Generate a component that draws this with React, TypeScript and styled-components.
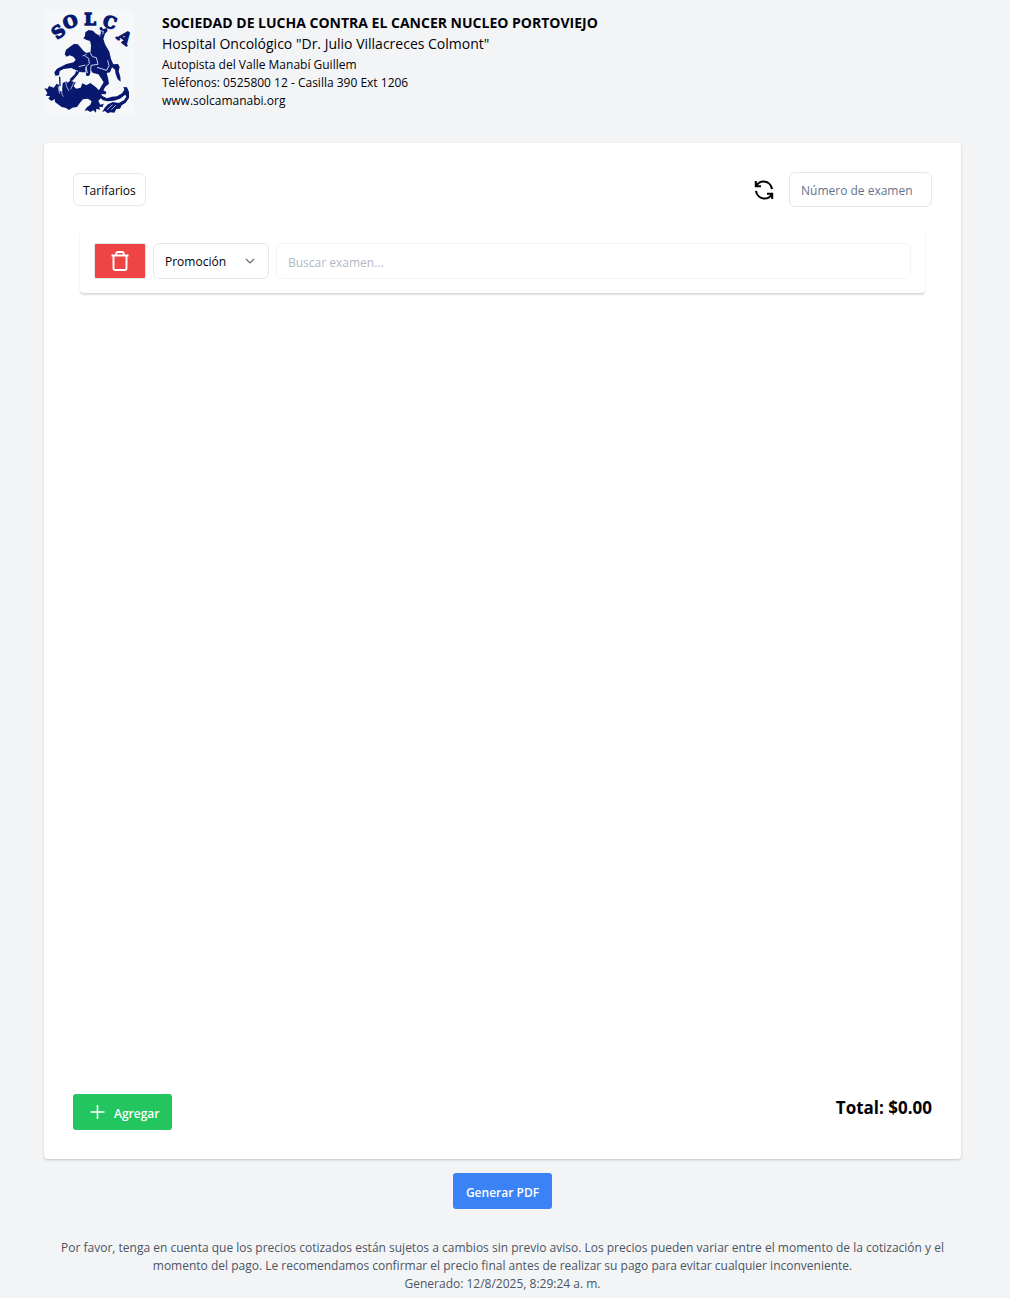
import React from "react";
import styled, { createGlobalStyle } from "styled-components";

const GlobalStyle = createGlobalStyle`
  *, *::before, *::after { box-sizing: border-box; }
  body {
    margin: 0;
    background: #f3f4f6;
    color: #020208;
    font-family: "Segoe UI", "Open Sans", "Noto Sans", sans-serif;
    font-size: 12px;
    line-height: 18px;
  }
  h1, h2, p { margin: 0; }
  button, input, select { font: inherit; color: inherit; }
`;

const Page = styled.div`
  display: flex;
  flex-direction: column;
  min-height: 100vh;
  padding: 10px 49px 5px 44px;
`;

const Header = styled.header`
  display: flex;
  gap: 28px;
  margin-bottom: 29px;
`;

const Logo = styled.svg`
  width: 90px;
  height: 104px;
  flex: none;
  overflow: visible;
  background: #f5f7f9;
  color: #08186f;
`;

const Organisation = styled.div`
  padding-top: 4px;
`;

const Name = styled.h1`
  font-size: 14px;
  font-weight: 700;
  line-height: 18px;
`;

const Hospital = styled.h2`
  font-size: 14px;
  font-weight: 400;
  line-height: 24px;
`;

const Card = styled.main`
  display: flex;
  flex-direction: column;
  flex: 1;
  padding: 29px;
  background: #fff;
  border-radius: 4px;
  box-shadow: 0 1px 3px rgba(0, 0, 0, 0.1), 0 1px 2px rgba(0, 0, 0, 0.1);
`;

const Bar = styled.div`
  display: flex;
  align-items: center;
  justify-content: space-between;
`;

const Group = styled.div`
  display: flex;
  align-items: center;
  gap: 15px;
`;

const OutlineButton = styled.button`
  height: 33px;
  padding: 2px 9px 0;
  background: #fff;
  border: 1px solid #e2e8f0;
  border-radius: 6px;
  cursor: pointer;
`;

const IconButton = styled.button`
  display: flex;
  padding: 0;
  border: 0;
  background: none;
  cursor: pointer;
`;

const Field = styled.input`
  min-width: 0;
  padding: 2px 11px 0;
  background: #fff;
  border: 1px solid #e2e8f0;
  border-radius: 6px;
  &::placeholder { color: #64748b; opacity: 1; }
  &:disabled { opacity: 0.5; }
`;

const NumberField = styled(Field)`
  width: 143px;
  height: 35px;
`;

const SearchField = styled(Field)`
  flex: 1;
  height: 36px;
`;

const List = styled.section`
  flex: 1;
  padding: 22px 7px;
`;

const Item = styled.div`
  display: flex;
  align-items: center;
  gap: 7px;
  padding: 14px;
  border-radius: 4px;
  box-shadow: 0 2px 2px rgba(0, 0, 0, 0.12), 0 1px 1px rgba(0, 0, 0, 0.05);
`;

const DeleteButton = styled.button`
  display: flex;
  align-items: center;
  justify-content: center;
  width: 52px;
  height: 36px;
  padding: 0;
  color: #fff;
  background: #ef4444;
  border: 1px solid #e2e8f0;
  border-radius: 2px;
  cursor: pointer;
`;

const SelectBox = styled.div`
  display: grid;
  align-items: center;
  width: 116px;
  & > * { grid-area: 1 / 1; }
  & > svg { justify-self: end; margin-right: 13px; pointer-events: none; }
`;

const Select = styled.select`
  appearance: none;
  width: 100%;
  height: 36px;
  padding: 2px 11px 0;
  background: #fff;
  border: 1px solid #e2e8f0;
  border-radius: 6px;
`;

const Footer = styled.div`
  display: flex;
  align-items: flex-start;
  justify-content: space-between;
`;

const SolidButton = styled.button<{ $tone: string }>`
  display: flex;
  align-items: center;
  justify-content: center;
  gap: 6px;
  height: 36px;
  padding: 0 13px;
  color: #fff;
  font-weight: 600;
  background: ${(p) => p.$tone};
  border: 0;
  border-radius: 3px;
  cursor: pointer;
  & > span { padding-top: 3px; }
`;

const Total = styled.p`
  font-size: 17px;
  font-weight: 700;
  line-height: 28px;
`;

const Actions = styled.div`
  display: flex;
  justify-content: center;
  padding: 14px 0 30px;
`;

const Notice = styled.footer`
  padding: 0 14px;
  color: #4b5563;
  text-align: center;
`;

function SolcaLogo() {
  return (
    <Logo viewBox="24 18 270 312" role="img" aria-label="SOLCA" fill="currentColor">
      <g fontFamily="DejaVu Serif, serif" fontWeight="700" fontSize="50" textAnchor="middle" stroke="currentColor" strokeWidth="4">
        <text transform="translate(67 83) rotate(-38)" y="18">S</text>
        <text transform="translate(103 53) rotate(-20)" y="18">O</text>
        <text transform="translate(162 45)" y="18">L</text>
        <text transform="translate(222 54) rotate(18)" y="18">C</text>
        <text transform="translate(266 100) rotate(38)" y="18">A</text>
      </g>
      {/* rider and horse */}
      <path d="M142 103 L147 96 L148 85 L158 78 L171 80 L178 88 L188 94 L193 90 L193 79 L190 72 L196 68 L202 76 L212 72 L215 80 L207 89 L202 104 L207 121 L220 143 L225 165 L232 181 L246 180 L251 189 L248 202 L253 218 L254 233 L245 226 L239 210 L237 197 L228 190 L222 205 L212 207 L216 222 L219 239 L208 248 L202 259 L211 264 L209 271 L192 270 L187 262 L203 235 L195 222 L187 211 L171 207 L165 200 L160 215 L151 216 L149 205 L136 205 L119 198 L106 192 L83 195 L71 201 L69 214 L58 215 L55 205 L63 194 L91 180 L113 175 L119 167 L112 158 L101 154 L92 158 L86 151 L90 137 L102 128 L115 119 L121 121 L125 120 L130 126 L143 141 L151 147 L164 143 L165 123 L162 111 L152 108 Z" />
      {/* lance and raised foreleg */}
      <path d="M131 198 L120 214 L106 229 L94 242" fill="none" stroke="currentColor" strokeWidth="5" />
      <path d="M120 200 L128 207 L114 224 L107 231 L101 226 L117 210 Z" />
      <path d="M71 218 L72 246" stroke="currentColor" strokeWidth="4" />
      {/* dragon */}
      <path d="M25 252 L34 255 L39 246 L53 251 L62 239 L69 243 L70 262 L78 262 L80 237 L91 232 L97 238 L106 232 L119 235 L113 247 L121 254 L134 251 L139 238 L151 244 L163 237 L180 250 L191 261 L199 276 L213 283 L228 278 L243 277 L258 268 L265 257 L262 249 L273 250 L279 264 L279 282 L269 296 L257 304 L252 314 L241 315 L235 326 L224 325 L215 328 L207 321 L199 324 L206 311 L216 301 L230 294 L248 297 L264 289 L271 278 L268 272 L252 284 L234 290 L214 292 L201 289 L194 283 L187 291 L193 302 L203 299 L200 309 L190 308 L192 317 L181 314 L180 326 L172 319 L163 324 L154 319 L145 320 L153 310 L163 302 L167 292 L156 284 L141 286 L132 296 L123 309 L109 311 L99 318 L90 312 L77 309 L66 301 L57 294 L56 285 L47 291 L37 284 L42 276 L29 275 L34 267 Z" />
      {/* saddle, reins and harness */}
      <g fill="none" stroke="#eef2fa" strokeWidth="2.5" strokeLinejoin="round">
        <path d="M148 157 L158 163 L160 179 L150 188 L154 207" />
        <path d="M162 145 L169 158 L181 161 L186 181 L165 184 L164 204" />
        <path d="M183 190 L212 199 L219 185 L215 169" />
        <path d="M128 188 L148 183 M149 190 L150 208 M140 156 L152 151" />
        <path d="M191 98 L194 80 L202 82 L200 91" />
        <path d="M86 211 L91 246 L99 261 M120 224 L111 241 L104 256" strokeWidth="2" />
        <path d="M76 246 L78 271 L82 278 M66 247 L71 269" strokeWidth="2" />
        <path d="M230 302 L213 317 M240 303 L226 317" strokeWidth="2" />
      </g>
    </Logo>
  );
}

function RefreshIcon() {
  return (
    <svg width="20" height="20" viewBox="0 0 20 20" fill="none" stroke="currentColor" strokeWidth="2">
      <path d="M1.8 1V6.2H7M2.2 5.8C4 2.8 6.5 1.4 9.5 1.4C14 1.4 17.5 4.7 18 9.2" />
      <path d="M18.2 19V13.8H13M17.8 14.2C16 17.2 13.5 18.6 10.5 18.6C6 18.6 2.5 15.3 2 10.8" />
    </svg>
  );
}

function TrashIcon() {
  return (
    <svg width="20" height="20" viewBox="0 0 20 20" fill="none" stroke="currentColor" strokeWidth="1.9" strokeLinejoin="round">
      <path d="M1.5 4.5H18.5M3.5 4.5V17.2Q3.5 19 5.3 19H14.7Q16.5 19 16.5 17.2V4.5M6.3 4.2V2.5Q6.3 1 7.8 1H12.2Q13.7 1 13.7 2.5V4.2" />
    </svg>
  );
}

function ChevronIcon() {
  return (
    <svg width="12" height="12" viewBox="0 0 12 12" fill="none" stroke="#64646f" strokeWidth="1.1">
      <path d="M2 4L6 8L10 4" />
    </svg>
  );
}

function PlusIcon() {
  return (
    <svg width="22" height="22" viewBox="0 0 22 22" fill="none" stroke="currentColor" strokeWidth="1.6">
      <path d="M11.5 4V18M4.5 11H18.5" />
    </svg>
  );
}

export default function App() {
  return (
    <>
      <GlobalStyle />
      <Page>
        <Header>
          <SolcaLogo />
          <Organisation>
            <Name>SOCIEDAD DE LUCHA CONTRA EL CANCER NUCLEO PORTOVIEJO</Name>
            <Hospital>Hospital Oncológico "Dr. Julio Villacreces Colmont"</Hospital>
            <p>Autopista del Valle Manabí Guillem</p>
            <p>Teléfonos: 0525800 12 - Casilla 390 Ext 1206</p>
            <p>www.solcamanabi.org</p>
          </Organisation>
        </Header>
        <Card>
          <Bar>
            <OutlineButton type="button">Tarifarios</OutlineButton>
            <Group>
              <IconButton type="button" aria-label="Actualizar"><RefreshIcon /></IconButton>
              <NumberField type="text" aria-label="Número de examen" placeholder="Número de examen" />
            </Group>
          </Bar>
          <List>
            <Item>
              <DeleteButton type="button" aria-label="Eliminar"><TrashIcon /></DeleteButton>
              <SelectBox>
                <Select aria-label="Tarifario" defaultValue="promo">
                  <option value="promo">Promoción</option>
                </Select>
                <ChevronIcon />
              </SelectBox>
              <SearchField type="text" aria-label="Buscar examen" placeholder="Buscar examen..." disabled />
            </Item>
          </List>
          <Footer>
            <SolidButton type="button" $tone="#22c55e"><PlusIcon /><span>Agregar</span></SolidButton>
            <Total>Total: $0.00</Total>
          </Footer>
        </Card>
        <Actions>
          <SolidButton type="button" $tone="#3b82f6"><span>Generar PDF</span></SolidButton>
        </Actions>
        <Notice>
          <p>
            Por favor, tenga en cuenta que los precios cotizados están sujetos a cambios sin previo aviso. Los precios
            pueden variar entre el momento de la cotización y el momento del pago. Le recomendamos confirmar el precio
            final antes de realizar su pago para evitar cualquier inconveniente.
          </p>
          <p>Generado: 12/8/2025, 8:29:24 a. m.</p>
        </Notice>
      </Page>
    </>
  );
}
